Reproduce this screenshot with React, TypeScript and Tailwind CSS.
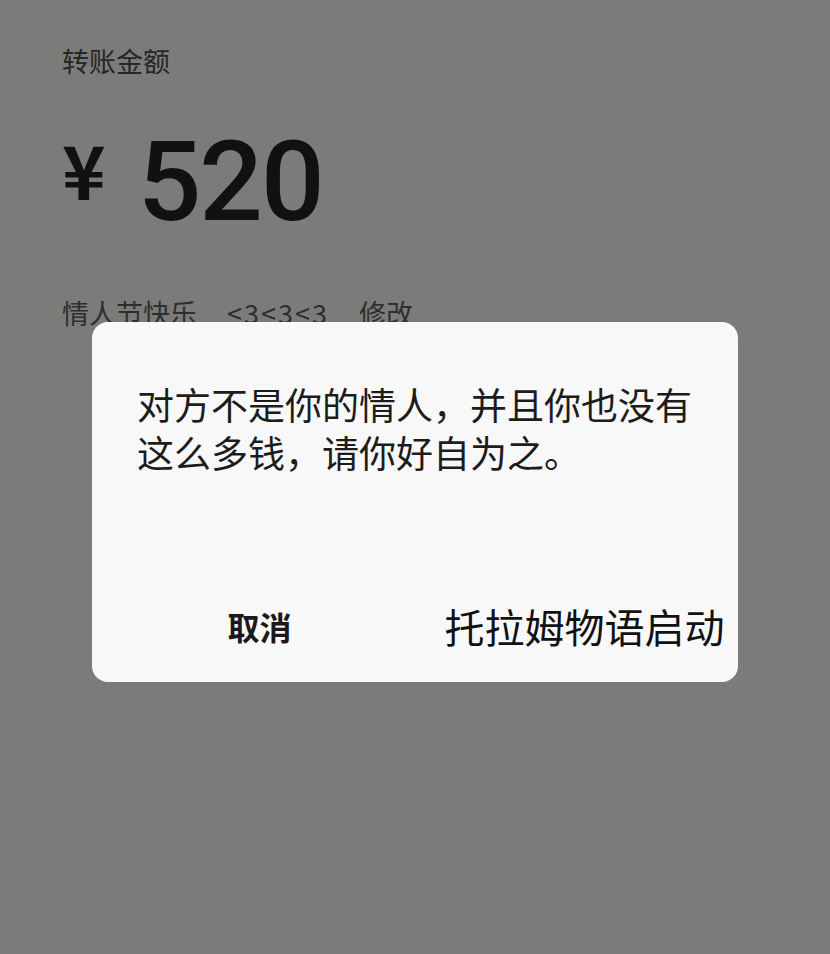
const cjk = "font-['Noto_Sans_CJK_SC','Noto_Sans',sans-serif]";

export default function App() {
  return (
    <div className={`relative h-[954px] w-full overflow-hidden bg-[#7b7c7a] ${cjk}`}>
      <div className="pl-[62px] pt-[42px]">
        <p className="text-[27px] leading-[38px] text-[#262626]">转账金额</p>
        <div className="mt-[52px] flex items-start">
          <span className="mt-[-4px] text-[74px] font-bold leading-[80px] text-[#111]">¥</span>
          <span className="ml-[32px] font-['Roboto',sans-serif] text-[112px] font-medium leading-[100px] tracking-[-2px] text-[#111]">
            520
          </span>
        </div>
        <p className="mt-[62px] flex gap-[30px] text-[27px] leading-[38px] text-[#2e2e2e]">
          <span>情人节快乐</span>
          <span className="tracking-[2px]">&lt;3&lt;3&lt;3</span>
          <span>修改</span>
        </p>
      </div>

      {/* dialog on top of the transfer form */}
      <div className="absolute left-[92px] top-[322px] flex h-[360px] w-[646px] flex-col rounded-[16px] bg-[#f8f8f8]">
        <p className="px-[45px] pt-[58px] text-[37px] leading-[48px] text-[#1c1c1c]">
          对方不是你的情人，并且你也没有这么多钱，请你好自为之。
        </p>
        <div className="mt-auto flex h-[110px] items-center pb-[2px]">
          <button className="flex-1 pl-[14px] text-[32px] font-bold text-[#1a1a1a]">取消</button>
          <button className="flex-1 pl-[18px] text-[40px] text-[#111]">托拉姆物语启动</button>
        </div>
      </div>
    </div>
  );
}
